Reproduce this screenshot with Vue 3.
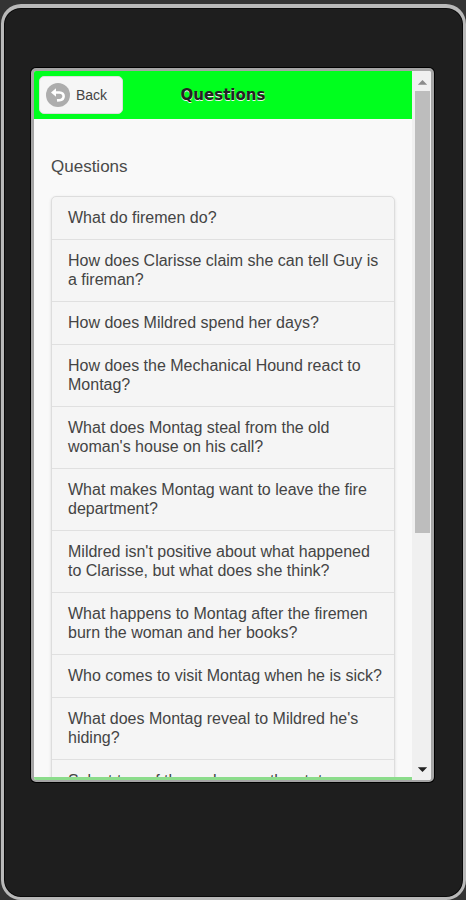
<template>
  <div class="page">
    <div class="phone">
      <div class="screen">
        <div class="view">
          <header class="header">
            <button type="button" class="back-btn">
              <svg class="back-icon" viewBox="0 0 24 24" aria-hidden="true">
                <circle cx="12" cy="12" r="12" fill="#adadad" />
                <path
                  d="M8 9.5H13.5C19 9.8 19 16.5 13.5 17.2L11 17.4"
                  fill="none"
                  stroke="#fff"
                  stroke-width="2.6"
                />
                <path d="M5 9.5L10 5.2V13.8Z" fill="#fff" />
              </svg>
              <span>Back</span>
            </button>
            <h1 class="title">Questions</h1>
          </header>

          <main class="content">
            <h2 class="heading">Questions</h2>
            <ul class="question-list">
              <li v-for="question in questions" :key="question">
                <a href="#">{{ question }}</a>
              </li>
            </ul>
          </main>

          <div class="footer-line"></div>
        </div>

        <div class="scrollbar" aria-hidden="true">
          <svg class="arrow" viewBox="0 0 16 20">
            <path d="M3 14L8 9L13 14Z" fill="#8b8b8b" />
          </svg>
          <div class="track">
            <div class="thumb"></div>
          </div>
          <svg class="arrow" viewBox="0 0 16 20">
            <path d="M3 7L8 12L13 7Z" fill="#222" />
          </svg>
        </div>
      </div>
    </div>
  </div>
</template>

<script setup>
const questions = [
  'What do firemen do?',
  'How does Clarisse claim she can tell Guy is a fireman?',
  'How does Mildred spend her days?',
  'How does the Mechanical Hound react to Montag?',
  'What does Montag steal from the old woman\'s house on his call?',
  'What makes Montag want to leave the fire department?',
  'Mildred isn\'t positive about what happened to Clarisse, but what does she think?',
  'What happens to Montag after the firemen burn the woman and her books?',
  'Who comes to visit Montag when he is sick?',
  'What does Montag reveal to Mildred he\'s hiding?',
  'Select two of three changes the state',
];
</script>

<style>
body {
  background: #343434;
}
</style>

<style scoped>
* {
  box-sizing: border-box;
}

.page {
  height: 100vh;
  padding: 4px 0 0 1px;
  background: #343434;
  font-family: "Liberation Sans", Arial, sans-serif;
}

.phone {
  display: flex;
  height: 100%;
  padding: 60px 29px 115px 27px;
  background: #1e1e1e;
  border: 3px solid #b9b9b9;
  border-top-width: 4px;
  border-radius: 20px;
  box-shadow: inset 0 0 0 1px #0a0a0a;
}

.screen {
  display: flex;
  flex: 1;
  min-width: 0;
  overflow: hidden;
  background: #f9f9f9;
  border: 3px solid #a5a5a5;
  border-bottom-width: 2px;
  border-radius: 5px;
  box-shadow: 0 0 0 1px #000;
}

.view {
  display: flex;
  flex: 1;
  flex-direction: column;
  min-width: 0;
}

.header {
  display: grid;
  flex: none;
  grid-template-columns: 84px 1fr 84px;
  align-items: center;
  height: 48px;
  padding: 0 5px;
  background: #00ff1e;
}

.back-btn {
  display: flex;
  align-items: center;
  gap: 6px;
  height: 38px;
  padding: 0 6px;
  background: #f6f6f6;
  border: 1px solid #ddd;
  border-radius: 5px;
  color: #444;
  font-family: inherit;
  font-size: 14px;
}

.back-icon {
  width: 24px;
  height: 24px;
}

.title {
  margin: 0;
  color: #222;
  font-family: "DejaVu Sans", Verdana, sans-serif;
  font-size: 15px;
  font-weight: bold;
  text-align: center;
  text-shadow: 0 1px 0 #f3f3f3;
}

.content {
  flex: 1;
  min-height: 0;
  padding: 37px 17px 0;
  overflow: hidden;
}

.heading {
  margin: 0 0 18px;
  color: #4a4a4a;
  font-size: 17px;
  font-weight: normal;
  line-height: 22px;
}

.question-list {
  margin: 0;
  padding: 0;
  list-style: none;
  background: #f5f5f5;
  border: 1px solid #ddd;
  border-radius: 5px;
  box-shadow: 0 1px 3px rgba(0, 0, 0, 0.12);
}

.question-list li + li {
  border-top: 1px solid #e0e0e0;
}

.question-list a {
  display: block;
  padding: 11px 8px 12px 16px;
  color: #444;
  font-size: 16px;
  line-height: 19px;
  text-decoration: none;
}

.footer-line {
  flex: none;
  height: 3px;
  background: #8bdc8b;
}

.scrollbar {
  display: flex;
  flex: none;
  flex-direction: column;
  width: 19px;
  padding: 0 1px 0 3px;
  background: #f0f0f0;
}

.arrow {
  flex: none;
  width: 15px;
  height: 20px;
}

.track {
  flex: 1;
}

.thumb {
  height: 66%;
  background: #bdbdbd;
}
</style>
